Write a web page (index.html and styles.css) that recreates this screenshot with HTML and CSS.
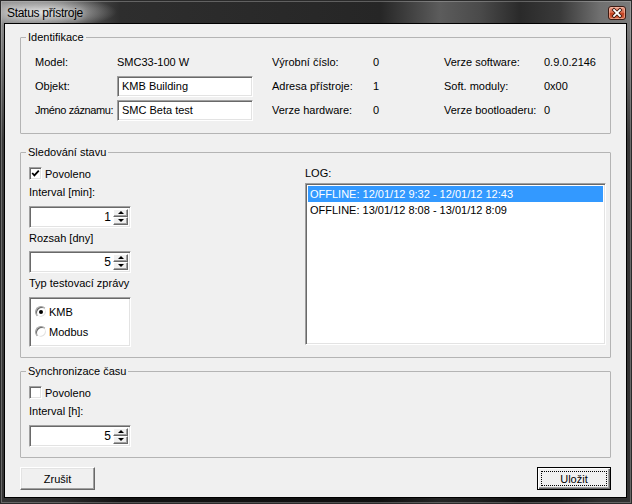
FILE: index.html
```html
<!DOCTYPE html>
<html lang="cs">
<head>
<meta charset="utf-8">
<title>Status přístroje</title>
<link rel="stylesheet" href="styles.css">
</head>
<body>
<div class="window">
  <div class="titlebar">
    <span class="title">Status přístroje</span>
    <span class="close-btn">
      <svg width="18" height="14" viewBox="0 0 18 14">
        <path d="M6 4 L12 10 M12 4 L6 10" stroke="#3a1208" stroke-width="3.4" stroke-linecap="square"/>
        <path d="M6 4 L12 10 M12 4 L6 10" stroke="#fff" stroke-width="1.8" stroke-linecap="square"/>
      </svg>
    </span>
  </div>
  <div class="frame-body">
    <div class="client">
      <fieldset class="group">
        <legend>Identifikace</legend>
        <div class="ident">
          <span class="cell">Model:</span>
          <span class="cell">SMC33-100 W</span>
          <span class="cell">Výrobní číslo:</span>
          <span class="cell">0</span>
          <span class="cell">Verze software:</span>
          <span class="cell">0.9.0.2146</span>

          <span class="cell">Objekt:</span>
          <span class="cell"><span class="field">KMB Building</span></span>
          <span class="cell">Adresa přístroje:</span>
          <span class="cell">1</span>
          <span class="cell">Soft. moduly:</span>
          <span class="cell">0x00</span>

          <span class="cell cell-tight">Jméno záznamu:</span>
          <span class="cell"><span class="field">SMC Beta test</span></span>
          <span class="cell">Verze hardware:</span>
          <span class="cell">0</span>
          <span class="cell">Verze bootloaderu:</span>
          <span class="cell">0</span>
        </div>
      </fieldset>

      <fieldset class="group group-status">
        <legend>Sledování stavu</legend>
        <div class="status">
          <div class="col-left">
            <label class="chk-row"><span class="chk checked"><svg width="9" height="9" viewBox="0 0 9 9"><path d="M1.2 4 L3.4 6.4 L7.8 1.6" fill="none" stroke="#000" stroke-width="1.8"/></svg></span>Povoleno</label>
            <div class="lbl">Interval [min]:</div>
            <div class="spin"><span class="spin-val">1</span><span class="spin-btns"><span class="sb"><i class="up"></i></span><span class="sb"><i class="down"></i></span></span></div>
            <div class="lbl lbl-tight">Rozsah [dny]</div>
            <div class="spin spin-b"><span class="spin-val">5</span><span class="spin-btns"><span class="sb"><i class="up"></i></span><span class="sb"><i class="down"></i></span></span></div>
            <div class="lbl lbl-tight">Typ testovací zprávy</div>
            <div class="radio-box">
              <label class="radio-row"><span class="radio on"></span>KMB</label>
              <label class="radio-row"><span class="radio"></span>Modbus</label>
            </div>
          </div>
          <div class="col-right">
            <div class="lbl-log">LOG:</div>
            <div class="listbox">
              <div class="item selected">OFFLINE: 12/01/12 9:32 - 12/01/12 12:43</div>
              <div class="item">OFFLINE: 13/01/12 8:08 - 13/01/12 8:09</div>
            </div>
          </div>
        </div>
      </fieldset>

      <fieldset class="group group-sync">
        <legend>Synchronizace času</legend>
        <div class="sync">
          <label class="chk-row"><span class="chk"></span>Povoleno</label>
          <div class="lbl">Interval [h]:</div>
          <div class="spin"><span class="spin-val">5</span><span class="spin-btns"><span class="sb"><i class="up"></i></span><span class="sb"><i class="down"></i></span></span></div>
        </div>
      </fieldset>

      <div class="buttons">
        <button class="btn" type="button">Zrušit</button>
        <button class="btn btn-default" type="button"><span class="focus">Uložit</span></button>
      </div>
    </div>
  </div>
</div>
</body>
</html>
```

FILE: styles.css
```css
* { box-sizing: border-box; }

html, body {
  margin: 0;
  padding: 0;
  background: #1a1a1a;
}

body {
  font-family: "Liberation Sans", Arial, sans-serif;
  font-size: 11px;
  color: #000;
}

.window {
  width: 632px;
  height: 504px;
  display: flex;
  flex-direction: column;
  background:
    radial-gradient(ellipse 75px 16px at 42px 12px, rgba(235,235,235,0.85), rgba(235,235,235,0) 100%),
    linear-gradient(to bottom, rgba(0,0,0,0) 0, rgba(0,0,0,0) 30px, rgba(0,0,0,0.55) 140px, rgba(0,0,0,0.6) 100%),
    linear-gradient(to right, #858585 0, #6a6a6a 60px, #2e2e2e 120px, #262626 380px, #5c5c5c 440px, #4a4a4a 480px, #2a2a2a 520px, #3a3a3a 560px, #707070 600px, #7a7a7a 632px);
  box-shadow: inset 0 0 0 1px #2a2a2a, inset 0 0 0 2px rgba(200,200,200,0.35);
}

.titlebar {
  height: 23px;
  flex: none;
  display: flex;
  align-items: center;
  justify-content: space-between;
  padding: 0 6px 0 7px;
}

.title {
  font-size: 12px;
  line-height: 14px;
  margin-top: 2px;
  color: #000;
  letter-spacing: -0.3px;
  text-shadow: 0 0 6px rgba(255,255,255,0.8);
}

.close-btn {
  width: 18px;
  height: 14px;
  margin-top: 2px;
  border: 1px solid #3d1a12;
  border-radius: 3px;
  background: linear-gradient(to bottom, #eba28f 0, #d96a4c 45%, #c2401f 55%, #d8694a 100%);
  box-shadow: inset 0 0 0 1px rgba(255,210,190,0.5);
  display: flex;
  align-items: center;
  justify-content: center;
  overflow: hidden;
}

.close-btn svg { display: block; margin: -1px; }

.frame-body {
  flex: 1;
  display: flex;
  padding: 0 5px 6px 4px;
}

.client {
  flex: 1;
  border: 1px solid #000;
  background: #f0f0f0;
  padding: 7px 15px 7px 15px;
  display: flex;
  flex-direction: column;
}

/* group boxes */
.group {
  margin: 0;
  padding: 0;
  min-width: 0;
  border: 1px solid #b4b4b4;
  border-radius: 1px;
}

.group legend {
  margin-left: 5px;
  padding: 0 2px;
  line-height: 13px;
  height: 13px;
}

.group-status { margin-top: 12px; }
.group-sync { margin-top: 7px; }

/* identification grid */
.ident {
  display: grid;
  grid-template-columns: 82px 155px 101px 71px 100px 1fr;
  grid-auto-rows: 22px;
  row-gap: 2px;
  padding: 7px 0 12px 14px;
}

.cell {
  display: flex;
  align-items: center;
  white-space: nowrap;
}

.cell-tight { letter-spacing: -0.4px; }

.field,
.spin,
.radio-box,
.listbox {
  background: #fff;
  border: 1px solid;
  border-color: #a0a0a0 #fff #fff #a0a0a0;
  box-shadow: inset 1px 1px 0 #696969, inset -1px -1px 0 #e3e3e3;
}

.field {
  width: 136px;
  height: 21px;
  display: flex;
  align-items: center;
  padding: 0 4px;
  white-space: nowrap;
}

/* status group */
.status {
  display: flex;
  padding: 7px 4px 10px 8px;
}

.col-left {
  width: 102px;
  flex: none;
  display: flex;
  flex-direction: column;
}

.col-right {
  flex: 1;
  margin-left: 174px;
  display: flex;
  flex-direction: column;
}

.chk-row {
  height: 15px;
  display: flex;
  align-items: center;
  gap: 3px;
}

.chk {
  width: 13px;
  height: 13px;
  flex: none;
  background: #fff;
  border: 1px solid;
  border-color: #a0a0a0 #fff #fff #a0a0a0;
  box-shadow: inset 1px 1px 0 #696969, inset -1px -1px 0 #e3e3e3;
  display: flex;
  align-items: center;
  justify-content: center;
}

.chk svg { display: block; }

.lbl {
  height: 15px;
  line-height: 15px;
  margin-top: 4px;
  white-space: nowrap;
}

.lbl-tight { margin-top: 3px; }

.spin {
  height: 22px;
  margin-top: 6px;
  display: flex;
  align-items: center;
  justify-content: flex-end;
  padding: 2px;
}

.spin-b { margin-top: 5px; }

.spin-val {
  padding-right: 2px;
  font-size: 12px;
}

.spin-btns {
  width: 15px;
  height: 100%;
  display: flex;
  flex-direction: column;
}

.sb {
  flex: 1;
  background: #f0f0f0;
  border: 1px solid;
  border-color: #fff #696969 #696969 #fff;
  box-shadow: inset -1px -1px 0 #a0a0a0;
  display: flex;
  align-items: center;
  justify-content: center;
}

.sb i {
  width: 0;
  height: 0;
  border-left: 3px solid transparent;
  border-right: 3px solid transparent;
}

.sb i.up { border-bottom: 3px solid #000; margin-top: -1px; }
.sb i.down { border-top: 3px solid #000; margin-top: -1px; }

.radio-box {
  height: 50px;
  margin-top: 6px;
  padding: 6px 0 0 5px;
  display: flex;
  flex-direction: column;
  gap: 5px;
}

.radio-row {
  height: 15px;
  display: flex;
  align-items: center;
  gap: 2px;
}

.radio {
  width: 12px;
  height: 12px;
  flex: none;
  border-radius: 50%;
  background: #fff;
  border: 1px solid;
  border-color: #a0a0a0 #fff #fff #a0a0a0;
  box-shadow: inset 1px 1px 0 #696969, inset -1px -1px 0 #e3e3e3;
  display: flex;
  align-items: center;
  justify-content: center;
}

.radio.on::after {
  content: "";
  width: 4px;
  height: 4px;
  border-radius: 50%;
  background: #000;
}

.lbl-log {
  height: 15px;
  line-height: 15px;
}

.listbox {
  height: 162px;
  margin-top: 2px;
  padding: 2px;
}

.item {
  height: 16px;
  line-height: 16px;
  padding-left: 2px;
  white-space: nowrap;
}

.item.selected {
  background: #3399ff;
  color: #fff;
}

/* sync group */
.sync {
  width: 110px;
  display: flex;
  flex-direction: column;
  padding: 7px 0 10px 8px;
}

.sync .spin { width: 102px; }

/* buttons */
.buttons {
  margin-top: auto;
  display: flex;
  justify-content: space-between;
}

.btn {
  width: 75px;
  height: 23px;
  margin: 0;
  padding: 0;
  font: inherit;
  color: #000;
  background: #f0f0f0;
  border: 1px solid;
  border-color: #fff #696969 #696969 #fff;
  box-shadow: inset -1px -1px 0 #a0a0a0, inset 1px 1px 0 #e3e3e3;
}

.btn-default {
  border: 1px solid #000;
  box-shadow: inset 1px 1px 0 #fff, inset -1px -1px 0 #696969, inset -2px -2px 0 #a0a0a0;
  padding: 3px;
  width: 74px;
}

.btn-default .focus {
  display: flex;
  width: 100%;
  height: 100%;
  align-items: center;
  justify-content: center;
  outline: 1px dotted #000;
  outline-offset: -1px;
}
```
